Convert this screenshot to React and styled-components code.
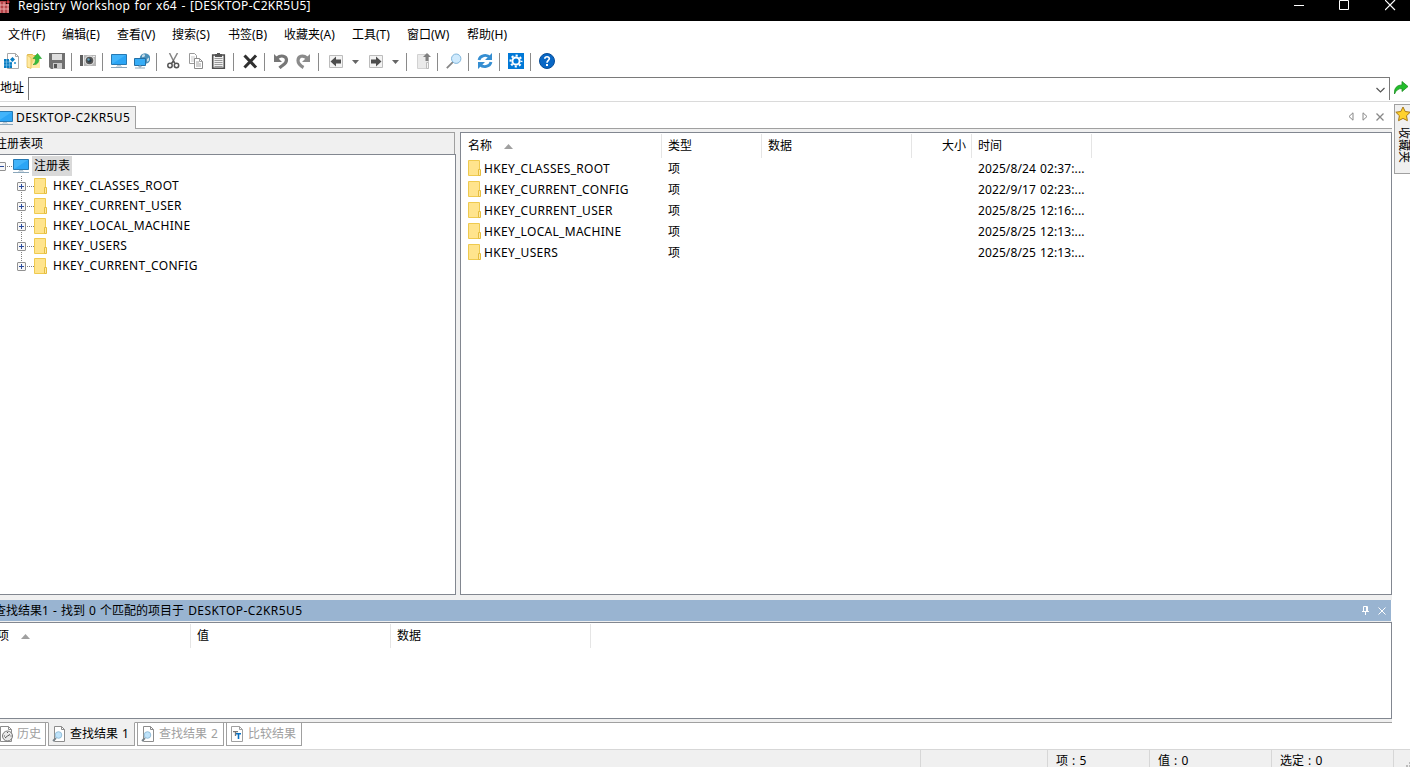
import React from 'react'
import styled, { createGlobalStyle } from 'styled-components'

const GlobalStyle = createGlobalStyle`
*{
    box-sizing:border-box;
}
body{
    margin:0;
    overflow:hidden;
    background:#fff;
    color:#000;
    font:12px/16px "Noto Sans", "Noto Sans CJK SC", sans-serif;
    word-spacing:1px;
}
svg{
    display:block;
    flex:none;
}
`

const menus = [
    ['文件(F)', 54], ['编辑(E)', 55], ['查看(V)', 55], ['搜索(S)', 56], ['书签(B)', 56],
    ['收藏夹(A)', 68], ['工具(T)', 55], ['窗口(W)', 60], ['帮助(H)', 60],
]

const treeKeys = ['HKEY_CLASSES_ROOT', 'HKEY_CURRENT_USER', 'HKEY_LOCAL_MACHINE', 'HKEY_USERS', 'HKEY_CURRENT_CONFIG']

const listRows = [
    ['HKEY_CLASSES_ROOT', '2025/8/24 02:37:...'],
    ['HKEY_CURRENT_CONFIG', '2022/9/17 02:23:...'],
    ['HKEY_CURRENT_USER', '2025/8/25 12:16:...'],
    ['HKEY_LOCAL_MACHINE', '2025/8/25 12:13:...'],
    ['HKEY_USERS', '2025/8/25 12:13:...'],
]

function Svg({ children, w = 16, h = 16 }) {
    return <svg width={w} height={h} viewBox={`0 0 ${w} ${h}`} fill="none">{children}</svg>
}

const NewIcon = () => (
    <Svg>
        <path d="M4.500 .5h8l3 3v12h-11z" fill="#fff" stroke="#a8a8a8" />
        <path d="M12.500 .5v3h3" stroke="#a8a8a8" />
        <path d="M1 6h5v3h3v6H1z" fill="#0a7dc2" />
        <path d="M1 9h8M1 12h8M3.500 6v9M6.500 7v8" stroke="#8cc8ea" strokeWidth=".6" />
        <path d="M9.500 4l2.500 2.500L9.500 9 7 6.500z" fill="#0a7dc2" />
        <path d="M11 9h2v2h-2z" fill="#55a9da" />
    </Svg>
)
const OpenIcon = () => (
    <Svg>
        <path d="M1.500 1.500h5l1 1h4v12h-10z" fill="#f6d77c" stroke="#dfb94d" />
        <path d="M8 7h6v8H4z" fill="#ffeaa5" />
        <path d="M1 2l4 3v10.500L1 14z" fill="#ffe9a0" stroke="#e3bd52" strokeWidth=".7" />
        <path d="M7 11.500c2-.5 2.500-3 2.500-6H7L11.500 .5 15.500 5.500H13c0 4-2 6.500-6 6z" fill="#36bd3b" stroke="#249a2b" strokeWidth=".6" />
    </Svg>
)
const SaveIcon = () => (
    <Svg>
        <path d="M0 0h16v16H2l-2-2z" fill="#707070" />
        <path d="M3 1h10v6H3z" fill="#dedede" />
        <path d="M4 10h9v6H4z" fill="#c9c9c9" />
        <path d="M5 11h3v4H5z" fill="#555" />
    </Svg>
)
const CameraIcon = () => (
    <Svg>
        <path d="M0 2h16v11H0z" fill="#b5b5b5" />
        <path d="M0 2h3v11H0z" fill="#5d5d5d" />
        <path d="M3 2h1v11H3zM13 3h2v1h-2z" fill="#eee" />
        <circle cx="9.500" cy="7.500" r="5" fill="#dedede" />
        <circle cx="9.500" cy="7.500" r="3.800" fill="#555" />
        <circle cx="9.500" cy="7.500" r="2" fill="#2b3d48" />
        <circle cx="8.500" cy="6.500" r="1.200" fill="#68a3bb" />
    </Svg>
)
const ComputerIcon = () => (
    <Svg>
        <path d="M.5 1.500h15v10H.5z" fill="#42b4fa" stroke="#2679b3" />
        <path d="M1 11L15 2v9z" fill="#2ba5f5" />
        <path d="M6 12h4v1H6z" fill="#b9c8d3" />
        <path d="M0 14.500h16" stroke="#8ba7bb" />
        <path d="M5 13.500h6" stroke="#d2dce4" />
    </Svg>
)
const NetworkIcon = () => (
    <Svg>
        <circle cx="11" cy="5.500" r="5.300" fill="#4a8fb8" />
        <path d="M8 2.500c1.500-2 3-1.500 3 0S9 4.500 8 4zM13 6l2-1.500v3L13 9z" fill="#c8dce7" />
        <path d="M.5 5.500h11v7H.5z" fill="#36adf7" stroke="#246fa5" />
        <path d="M5 13h2v1H5zM1 15h10" stroke="#91a9b9" />
    </Svg>
)
const CutIcon = () => (
    <Svg>
        <path d="M4.500 0l5 10M12.500 0L7 10" stroke="#858585" strokeWidth="1.500" />
        <circle cx="5" cy="12.500" r="2.200" stroke="#555" strokeWidth="1.500" />
        <circle cx="11.500" cy="12.500" r="2.200" stroke="#555" strokeWidth="1.500" />
        <path d="M6.500 10.500l2-2.500 1.500 2.500" stroke="#555" strokeWidth="1.400" />
    </Svg>
)
const CopyIcon = () => (
    <Svg>
        <path d="M1.500 .5h5l2 2v8h-7z" fill="#fff" stroke="#999" />
        <path d="M3 4h4M3 6h4M3 8h4" stroke="#bbb" strokeWidth=".8" />
        <path d="M6.500 5.500h5l3 3v7h-8z" fill="#fff" stroke="#8b8b8b" />
        <path d="M11.500 5.500v3h3M8 9h3M8 11h5M8 13h5" stroke="#999" strokeWidth=".9" />
    </Svg>
)
const PasteIcon = () => (
    <Svg>
        <path d="M1.700 2h11.600v13.200H1.700z" fill="#f0f0f0" stroke="#4c4c4c" strokeWidth="1.600" />
        <path d="M4 1h2V0h3v1h2v3H4z" fill="#555" />
        <path d="M3.500 5.500h8M3.500 7.500h8M3.500 9.500h8M3.500 11.500h8M3.500 13.500h8" stroke="#999" />
    </Svg>
)
const DeleteIcon = () => (
    <Svg><path d="M3.500 3.500l9.500 10M13 3.500l-9.500 10" stroke="#303030" strokeWidth="3" strokeLinecap="square" /></Svg>
)
const UndoIcon = () => (
    <Svg>
        <path d="M4 5c4-3.500 9.500-2 9.500 2S10 11.500 6.500 15" stroke="#777" strokeWidth="3.200" />
        <path d="M1 1v8h8z" fill="#777" />
    </Svg>
)
const RedoIcon = () => (
    <Svg>
        <path d="M11 5C7 1.500 2 3 2 7.500c0 3 2 5 5.500 7" stroke="#8b8b8b" strokeWidth="3.200" />
        <path d="M14 1v8H6z" fill="#8b8b8b" />
    </Svg>
)
const BackIcon = () => (
    <Svg>
        <path d="M2.500 2.500h13v12h-13z" fill="#f3f3f3" stroke="#bcbcbc" />
        <path d="M3.500 8.500L9 3.500V6.500h5v4H9v3z" fill="#4d4d4d" />
    </Svg>
)
const ForwardIcon = () => (
    <Svg>
        <path d="M2.500 2.500h13v12h-13z" fill="#f3f3f3" stroke="#bcbcbc" />
        <path d="M14.500 8.500L9 3.500V6.500H4v4h5v3z" fill="#4d4d4d" />
    </Svg>
)
const UpIcon = () => (
    <Svg>
        <path d="M2.500 1.500h11v14h-11z" fill="#eaeaea" stroke="#d2d2d2" />
        <path d="M12 0l4 4h-2.500v4h-3V4H8z" fill="#808080" />
        <path d="M11.500 9.500h2v6h-2z" fill="#f5f5f5" stroke="#bcbcbc" />
    </Svg>
)
const SearchIcon = () => (
    <Svg>
        <path d="M.8 15.200l6-6" stroke="#858585" strokeWidth="1.800" />
        <circle cx="10.200" cy="5.700" r="4.700" fill="#cfeafd" stroke="#80b6dc" />
    </Svg>
)
const RefreshIcon = () => (
    <Svg>
        <path d="M2 7c1-5 8-6 11-2.500M14 9c-1 5-8 6-11 2.500" stroke="#358ed2" strokeWidth="2.800" />
        <path d="M15 0v7H8zM1 16V9h7z" fill="#358ed2" />
    </Svg>
)
const GearIcon = () => (
    <Svg>
        <path d="M0 0h16v16H0z" fill="#0078d7" />
        <circle cx="8" cy="8" r="3.600" stroke="#fff" strokeWidth="2" />
        <circle cx="8" cy="8" r="5.500" stroke="#fff" strokeWidth="2" strokeDasharray="2.160 2.160" strokeDashoffset="1.080" />
    </Svg>
)
const HelpIcon = () => (
    <Svg>
        <circle cx="8" cy="8" r="7.500" fill="#0867c5" stroke="#074d98" />
        <path d="M5.800 5.800c.2-2.800 4.700-2.600 4.500 0C10.200 7.300 8 7.400 8 9.700" stroke="#fff" strokeWidth="1.700" />
        <path d="M7 11h2v2H7z" fill="#fff" />
    </Svg>
)
const FolderIcon = () => (
    <Svg w={13} h={16}>
        <path d="M.5 .5h11v15H.5z" fill="#ffe48d" stroke="#efca4f" />
        <path d="M10.500 9.500h2v6h-2z" fill="#ffeaa6" stroke="#e5bd3f" />
    </Svg>
)
const AppIcon = () => (
    <Svg w={18} h={14}>
        <path d="M0 1h17v12H0z" fill="#b54448" />
        <path d="M8 2v11M12 2v11M16 2v11M0 5h17M0 9h17" stroke="#e9aaaa" />
        <path d="M14 0h4v4h-4z" fill="#000" />
        <path d="M16 0l2 2-2 2-2-2z" fill="#c5363d" />
    </Svg>
)
const GoIcon = () => (
    <Svg>
        <path d="M1.500 14C1 8 4 5 9 5V1.500L15 6.500 9 11.500V8.500C5 8.500 3 10.500 1.500 14z" fill="#22be2b" stroke="#198e20" strokeWidth=".8" />
    </Svg>
)
const StarIcon = () => (
    <Svg>
        <path d="M8 1l2.200 4.500 5 .7-3.700 3.500.9 5L8 12.400l-4.500 2.300.9-5L.8 6.200l5-.7z" fill="#ffd22e" stroke="#a87916" />
    </Svg>
)
const PageSearchIcon = () => (
    <Svg>
        <path d="M3.500 .5h7l3 3v12h-10z" fill="#fff" stroke="#8c8c8c" />
        <path d="M10.500 .5v3h3" stroke="#8c8c8c" />
        <path d="M2 15l3-3" stroke="#78838b" strokeWidth="1.800" />
        <circle cx="7.500" cy="9" r="3.300" fill="#bfe3fa" stroke="#94bfda" />
    </Svg>
)
const HistoryIcon = () => (
    <Svg>
        <path d="M2.500 .5h8l3 3v12h-11z" fill="#fff" stroke="#8c8c8c" />
        <path d="M10.500 .5v3h3" stroke="#8c8c8c" />
        <circle cx="9.500" cy="10" r="5" fill="#e9e9e9" stroke="#777" />
        <path d="M7 12l2.500-2 2.500-1.500M9.500 6v1M6 10h1M12.500 10h1" stroke="#555" />
    </Svg>
)
const CompareIcon = () => (
    <Svg>
        <path d="M2.500 .5h8l3 3v12h-11z" fill="#fff" stroke="#a0a0a0" />
        <path d="M10.500 .5v3h3" stroke="#a0a0a0" />
        <path d="M4 5.700h5M6.500 5.500V10" stroke="#777" strokeWidth="1.300" />
        <path d="M7 7.700h5M9.500 7.500V13" stroke="#0871c4" strokeWidth="1.600" />
    </Svg>
)
const SortArrow = () => <Svg w={9} h={5}><path d="M0 5L4.500 0 9 5z" fill="#a0a0a0" /></Svg>

const toolGroups = [
    [NewIcon, OpenIcon, SaveIcon], [CameraIcon], [ComputerIcon, NetworkIcon], [CutIcon, CopyIcon, PasteIcon],
    [DeleteIcon], [UndoIcon, RedoIcon], [BackIcon, 'drop', ForwardIcon, 'drop'], [UpIcon], [SearchIcon],
    [RefreshIcon], [GearIcon], [HelpIcon],
]

function Toolbar() {
    return (
        <Tools>
            {toolGroups.map((group, i) => (
                <ToolGroup key={i}>
                    {group.map((Icon, j) => Icon === 'drop'
                        ? <Drop key={j}><Svg w={7} h={4}><path d="M0 0h7L3.500 4z" fill="#666" /></Svg></Drop>
                        : <Tool key={j}><Icon /></Tool>)}
                </ToolGroup>
            ))}
        </Tools>
    )
}

function Tree() {
    return (
        <TreePane>
            <TreeHeader>注册表项</TreeHeader>
            <TreeBody>
                <TreeRoot>
                    <Expander />
                    <Dots $w={7} />
                    <ComputerIcon />
                    <RootLabel>注册表</RootLabel>
                </TreeRoot>
                <Branch>
                    {treeKeys.map(name => (
                        <TreeRow key={name}>
                            <Expander $closed />
                            <Dots $w={8} />
                            <FolderIcon />
                            <KeyName>{name}</KeyName>
                        </TreeRow>
                    ))}
                </Branch>
            </TreeBody>
        </TreePane>
    )
}

function List() {
    return (
        <ListPane>
            <Header>
                <Cell $w={201} $pad={7}>名称<SortArrow /></Cell>
                <Cell $w={100}>类型</Cell>
                <Cell $w={150}>数据</Cell>
                <Cell $w={60} $right>大小</Cell>
                <Cell $w={120}>时间</Cell>
            </Header>
            {listRows.map(([name, time]) => (
                <ListRow key={name}>
                    <NameCell><FolderIcon />{name}</NameCell>
                    <TypeCell>项</TypeCell>
                    <TimeCell>{time}</TimeCell>
                </ListRow>
            ))}
        </ListPane>
    )
}

function Results() {
    return (
        <>
            <ResultsTitle>
                <ResultsText>查找结果1 - 找到 0 个匹配的项目于 <Latin>DESKTOP-C2KR5U5</Latin></ResultsText>
                <Svg w={7} h={9}><path d="M1.500 5V.5h4V5M4.500 0v5M0 5.500h7M3.500 5v4" stroke="#fff" /></Svg>
                <Svg w={8} h={8}><path d="M.5 .5l7 7M7.500 .5l-7 7" stroke="#fff" /></Svg>
            </ResultsTitle>
            <ResultsPane>
                <Header>
                    <Cell $w={200}>项<SortArrow /></Cell>
                    <Cell $w={200}>值</Cell>
                    <Cell $w={200}>数据</Cell>
                </Header>
            </ResultsPane>
            <BottomTabs>
                <BottomTab $w={54} $pad={5}><HistoryIcon />历史</BottomTab>
                <BottomTab $w={87} $active><PageSearchIcon />查找结果 1</BottomTab>
                <BottomTab $w={87}><PageSearchIcon />查找结果 2</BottomTab>
                <BottomTab $w={76}><CompareIcon />比较结果</BottomTab>
            </BottomTabs>
        </>
    )
}

function App() {
    return (
        <Window>
            <GlobalStyle />
            <TitleBar>
                <AppIcon />
                <Title>Registry Workshop for x64 - [DESKTOP-C2KR5U5]</Title>
                <WindowButtons>
                    <Svg w={11} h={11}><path d="M1 5.500h10" stroke="#fff" /></Svg>
                    <Svg w={11} h={11}><path d="M.5 .5h9v9h-9z" stroke="#fff" /></Svg>
                    <Svg w={11} h={11}><path d="M0 0l10 10M10 0L0 10" stroke="#fff" strokeWidth="1.200" /></Svg>
                </WindowButtons>
            </TitleBar>
            <MenuBar>
                {menus.map(([label, width]) => <MenuItem key={label} $w={width}>{label}</MenuItem>)}
            </MenuBar>
            <Toolbar />
            <AddressBar>
                <span>地址</span>
                <Combo><Svg w={9} h={6}><path d="M.5 1l4 4 4-4" stroke="#555" strokeWidth="1.200" /></Svg></Combo>
                <GoIcon />
            </AddressBar>
            <Main>
                <Content>
                    <DocTabs>
                        <DocTab><ComputerIcon /><Latin>DESKTOP-C2KR5U5</Latin></DocTab>
                        <DocNav>
                            <Svg w={6} h={9}><path d="M5 .8v7.400L1 4.500z" stroke="#888" /></Svg>
                            <Svg w={6} h={9}><path d="M1 .8v7.400l4-3.700z" stroke="#888" /></Svg>
                            <Svg w={8} h={8}><path d="M.5 .5l7 7M7.500 .5l-7 7" stroke="#888" strokeWidth="1.300" /></Svg>
                        </DocNav>
                    </DocTabs>
                    <Panes>
                        <Tree />
                        <List />
                    </Panes>
                    <Results />
                </Content>
                <SideTab><StarIcon /><SideText>收藏夹</SideText></SideTab>
            </Main>
            <StatusBar>
                <StatusCell $w={127} />
                <StatusCell $w={102}>项 : 5</StatusCell>
                <StatusCell $w={122}>值 : 0</StatusCell>
                <StatusCell $w={122}>选定 : 0</StatusCell>
                <StatusCell $w={17}><Svg w={4} h={6}><path d="M3 0h1v2H3zM0 3h2v2H0zM3 3h1v2H3z" fill="#bbb" /></Svg></StatusCell>
            </StatusBar>
        </Window>
    )
}

const Window = styled.div`
width:1410px;
height:767px;
display:flex;
flex-direction:column;
overflow:hidden;
white-space:nowrap;
`

const Latin = styled.span`
letter-spacing:0.4px;
`

const TitleBar = styled.div`
height:21px;
background:#000;
color:#fff;
display:flex;
align-items:flex-start;
flex:none;
> svg{
    margin-left:-8px;
}
`

const Title = styled.div`
flex:1;
margin:-2px 0 0 8px;
letter-spacing:0.28px;
`

const WindowButtons = styled.div`
display:flex;
gap:35px;
padding-right:14px;
`

const MenuBar = styled.div`
height:27px;
display:flex;
align-items:center;
padding:1px 0 0 8px;
flex:none;
`

const MenuItem = styled.div`
width:${props => props.$w}px;
`

const Tools = styled.div`
height:29px;
display:flex;
padding:5px 0 0 3px;
flex:none;
`

const ToolGroup = styled.div`
display:flex;
height:18px;
& + &{
    margin-left:-1px;
    padding-left:8px;
    border-left:1px solid #8a8a8a;
}
`

const Tool = styled.div`
width:23px;
`

const Drop = styled.div`
width:17px;
padding:7px 0 0 2px;
`

const AddressBar = styled.div`
height:25px;
display:flex;
border-bottom:1px solid #dadada;
flex:none;
> span{
    width:28px;
    padding-top:3px;
}
> svg{
    margin:3px 0 0 3px;
}
`

const Combo = styled.div`
width:1362px;
height:23px;
border:1px solid #7a7a7a;
border-bottom:none;
display:flex;
justify-content:flex-end;
padding:9px 4px 0 0;
`

const Main = styled.div`
height:647px;
display:flex;
flex:none;
`

const Content = styled.div`
width:1392px;
`

const DocTabs = styled.div`
height:27px;
display:flex;
justify-content:space-between;
padding-top:4px;
border-bottom:1px solid #a0a0a0;
`

const DocTab = styled.div`
width:136px;
height:23px;
background:#f0f0f0;
border-top:1px solid #a0a0a0;
border-right:1px solid #a0a0a0;
display:flex;
align-items:center;
gap:3px;
margin-bottom:-1px;
svg{
    margin-left:-3px;
}
`

const DocNav = styled.div`
display:flex;
align-items:center;
gap:8px;
padding-right:8px;
height:21px;
`

const Panes = styled.div`
height:471px;
display:flex;
gap:4px;
padding:3px 0 5px;
background:#f0f0f0;
`

const TreePane = styled.div`
width:456px;
display:flex;
flex-direction:column;
`

const TreeHeader = styled.div`
width:455px;
height:22px;
padding-top:3px;
border-top:1px solid #a0a0a0;
border-right:1px solid #a0a0a0;
text-indent:-5px;
overflow:hidden;
`

const TreeBody = styled.div`
flex:1;
border:1px solid #828790;
border-left:none;
background:#fff;
padding-top:1px;
overflow:hidden;
`

const TreeRoot = styled.div`
height:20px;
display:flex;
align-items:center;
margin-left:-3px;
`

const RootLabel = styled.div`
height:20px;
width:40px;
margin-left:3px;
padding:2px;
background:#d9d9d9;
`

const Branch = styled.div`
padding-left:17px;
background:repeating-linear-gradient(#808080 0 1px, #fff 1px 2px) 21px 0/1px 91px no-repeat;
`

const TreeRow = styled.div`
height:20px;
display:flex;
align-items:center;
`

const Expander = styled.div`
width:9px;
height:9px;
flex:none;
border:1px solid #919191;
border-radius:1px;
background:
    linear-gradient(#2b4b9b,#2b4b9b) center/5px 1px no-repeat,
    linear-gradient(#2b4b9b,#2b4b9b) center/1px ${props => props.$closed ? 5 : 0}px no-repeat,
    #f6f6f6;
`

const Dots = styled.div`
width:${props => props.$w}px;
height:1px;
background:repeating-linear-gradient(90deg, #fff 0 1px, #808080 1px 2px);
`

const KeyName = styled.div`
margin-left:6px;
letter-spacing:0.3px;
`

const ListPane = styled.div`
width:932px;
border:1px solid #828790;
background:#fff;
`

const Header = styled.div`
display:flex;
height:25px;
padding-top:1px;
`

const Cell = styled.div`
width:${props => props.$w}px;
height:24px;
display:flex;
align-items:center;
justify-content:${props => props.$right ? 'flex-end' : 'flex-start'};
gap:12px;
padding:0 ${props => props.$right ? 5 : 0}px 0 ${props => props.$pad || 6}px;
border-right:1px solid #e5e5e5;
`

const ListRow = styled.div`
height:21px;
display:flex;
align-items:center;
padding-left:7px;
`

const NameCell = styled.div`
width:200px;
display:flex;
align-items:center;
gap:3px;
letter-spacing:0.3px;
svg{
    margin-top:-1px;
}
`

const TypeCell = styled.div`
width:310px;
`

const TimeCell = styled.div`
letter-spacing:0.1px;
`

const ResultsTitle = styled.div`
width:1391px;
height:21px;
display:flex;
align-items:center;
gap:9px;
padding-right:5px;
background:#99b4d1;
`

const ResultsText = styled.div`
flex:1;
margin-left:-6px;
`

const ResultsPane = styled.div`
height:97px;
margin:1px 0 0 -10px;
background:#fff;
border:1px solid #828790;
box-shadow:0 -1px #f0f0f0;
`

const BottomTabs = styled.div`
height:28px;
display:flex;
gap:2px;
background:linear-gradient(#f0f0f0 0 3px, #a0a0a0 3px 4px, #fff 4px);
> :first-child{
    margin-left:-8px;
}
`

const BottomTab = styled.div`
width:${props => props.$w}px;
height:24px;
margin-top:3px;
display:flex;
align-items:center;
gap:3px;
padding-left:${props => props.$pad || 2}px;
border:1px solid #a0a0a0;
border-top-color:${props => props.$active ? '#f0f0f0' : '#a0a0a0'};
background:${props => props.$active ? '#f0f0f0' : '#fff'};
color:${props => props.$active ? '#000' : '#a0a0a0'};
`

const SideTab = styled.div`
width:20px;
height:70px;
margin:2px 0 0 2px;
border:1px solid #a0a0a0;
background:#f0f0f0;
flex:none;
padding-top:1px;
`

const SideText = styled.div`
writing-mode:vertical-rl;
text-orientation:sideways;
margin:5px 0 0 1px;
`

const StatusBar = styled.div`
height:18px;
display:flex;
justify-content:flex-end;
border-top:1px solid #d7d7d7;
background:#f0f0f0;
`

const StatusCell = styled.div`
width:${props => props.$w}px;
padding:3px 0 0 8px;
border-left:1px solid #d7d7d7;
svg{
    margin:9px 0 0 4px;
}
`

export default App
